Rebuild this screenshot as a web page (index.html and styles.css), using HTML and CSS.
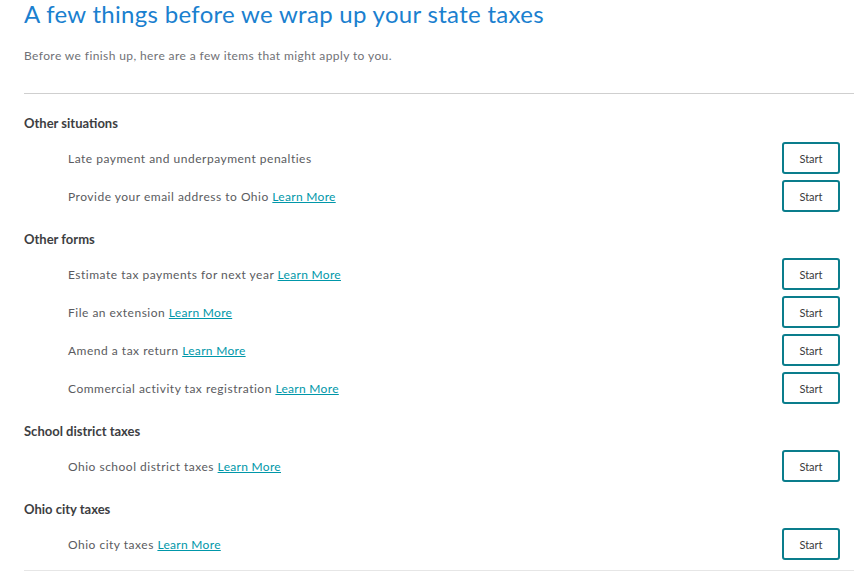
FILE: index.html
```html
<!DOCTYPE html>
<html lang="en">
<head>
  <meta charset="UTF-8" />
  <title>State taxes wrap up</title>
  <link rel="stylesheet" href="styles.css">
</head>
<body>
<div class="page">
  <h1 class="title">A few things before we wrap up your state taxes</h1>
  <p class="intro">Before we finish up, here are a few items that might apply to you.</p>

  <div class="list">
    <!-- Other situations -->
    <h2 class="group">Other situations</h2>
    <div class="item">
      <span class="label">Late payment and underpayment penalties</span>
      <button class="btn">Start</button>
    </div>
    <div class="item">
      <span class="label">Provide your email address to Ohio <a href="#">Learn More</a></span>
      <button class="btn">Start</button>
    </div>

    <!-- Other forms -->
    <h2 class="group">Other forms</h2>
    <div class="item">
      <span class="label">Estimate tax payments for next year <a href="#">Learn More</a></span>
      <button class="btn">Start</button>
    </div>
    <div class="item">
      <span class="label">File an extension <a href="#">Learn More</a></span>
      <button class="btn">Start</button>
    </div>
    <div class="item">
      <span class="label">Amend a tax return <a href="#">Learn More</a></span>
      <button class="btn">Start</button>
    </div>
    <div class="item">
      <span class="label">Commercial activity tax registration <a href="#">Learn More</a></span>
      <button class="btn">Start</button>
    </div>

    <!-- School district -->
    <h2 class="group">School district taxes</h2>
    <div class="item">
      <span class="label">Ohio school district taxes <a href="#">Learn More</a></span>
      <button class="btn">Start</button>
    </div>

    <!-- City -->
    <h2 class="group">Ohio city taxes</h2>
    <div class="item">
      <span class="label">Ohio city taxes <a href="#">Learn More</a></span>
      <button class="btn">Start</button>
    </div>
  </div>
</div>
</body>
</html>
```

FILE: styles.css
```css
body {
  margin: 0;
  font-family: Lato, "Noto Sans", sans-serif;
  background: #fff;
  color: #393a3d;
}

.page {
  padding: 0 9px 0 24px;
}

/* Header */
.title {
  margin: 0;
  font-size: 24px;
  font-weight: 400;
  line-height: 28px;
  color: #1a80cf;
  letter-spacing: 0.3px;
}

.intro {
  margin: 20px 0 0;
  font-size: 12px;
  line-height: 16px;
  color: #707176;
  letter-spacing: 0.4px;
}

/* List */
.list {
  margin-top: 29px;
  border-top: 1px solid #cfcfcf;
  border-bottom: 1px solid #e6e6e6;
  padding: 21px 0 7px;
}

.group {
  margin: 16px 0 8px;
  font-size: 13px;
  font-weight: 700;
  line-height: 16px;
  color: #3d3e42;
}

.group:first-child {
  margin-top: 0;
}

.item {
  display: flex;
  align-items: center;
  justify-content: space-between;
  height: 38px;
  padding: 0 14px 0 44px;
}

.label {
  font-size: 12px;
  color: #5a5b60;
  letter-spacing: 0.5px;
}

.label a {
  color: #0097a9;
  letter-spacing: 0.3px;
}

.btn {
  width: 58px;
  height: 32px;
  background: #fff;
  border: 2px solid #0a7d8c;
  border-radius: 3px;
  font-family: inherit;
  font-size: 11px;
  color: #393a3d;
  cursor: pointer;
}
```
